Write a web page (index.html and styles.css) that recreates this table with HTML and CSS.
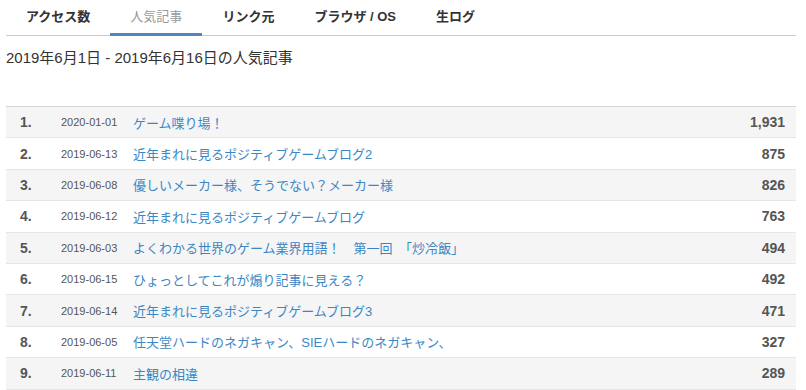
FILE: index.html
```html
<!DOCTYPE html>
<html lang="ja">
<head>
<meta charset="utf-8">
<link rel="stylesheet" href="styles.css">
</head>
<body>
<div class="page">
  <nav class="tabs">
    <a class="tab">アクセス数</a>
    <a class="tab active">人気記事</a>
    <a class="tab">リンク元</a>
    <a class="tab">ブラウザ / OS</a>
    <a class="tab">生ログ</a>
  </nav>
  <h2 class="period">2019年6月1日 - 2019年6月16日の人気記事</h2>
  <div class="ranking">
    <div class="row"><span class="rank">1.</span><span class="date">2020-01-01</span><a class="title">ゲーム喋り場！</a><span class="count">1,931</span></div>
    <div class="row"><span class="rank">2.</span><span class="date">2019-06-13</span><a class="title">近年まれに見るポジティブゲームブログ2</a><span class="count">875</span></div>
    <div class="row"><span class="rank">3.</span><span class="date">2019-06-08</span><a class="title">優しいメーカー様、そうでない？メーカー様</a><span class="count">826</span></div>
    <div class="row"><span class="rank">4.</span><span class="date">2019-06-12</span><a class="title">近年まれに見るポジティブゲームブログ</a><span class="count">763</span></div>
    <div class="row"><span class="rank">5.</span><span class="date">2019-06-03</span><a class="title">よくわかる世界のゲーム業界用語！　第一回　「炒冷飯」</a><span class="count">494</span></div>
    <div class="row"><span class="rank">6.</span><span class="date">2019-06-15</span><a class="title">ひょっとしてこれが煽り記事に見える？</a><span class="count">492</span></div>
    <div class="row"><span class="rank">7.</span><span class="date">2019-06-14</span><a class="title">近年まれに見るポジティブゲームブログ3</a><span class="count">471</span></div>
    <div class="row"><span class="rank">8.</span><span class="date">2019-06-05</span><a class="title">任天堂ハードのネガキャン、SIEハードのネガキャン、</a><span class="count">327</span></div>
    <div class="row"><span class="rank">9.</span><span class="date">2019-06-11</span><a class="title">主観の相違</a><span class="count">289</span></div>
  </div>
</div>
</body>
</html>
```

FILE: styles.css
```css
html, body {
  margin: 0;
  padding: 0;
  background: #ffffff;
}
body {
  font-family: "Liberation Sans", "Noto Sans CJK JP", sans-serif;
  color: #333333;
}
.page {
  padding: 0 10px 0 6px;
}
.tabs {
  display: flex;
  height: 35px;
  border-bottom: 1px solid #cccccc;
}
.tab {
  display: flex;
  align-items: center;
  padding: 0 20px 2px 20px;
  font-size: 13px;
  font-weight: bold;
  color: #333333;
  border-bottom: 3px solid transparent;
  margin-bottom: -1px;
}
.tab.active {
  color: #9a9a9a;
  font-weight: normal;
  border-bottom-color: #4f86bd;
}
.period {
  margin: 10px 0 0 0;
  font-size: 15px;
  font-weight: normal;
  line-height: 24px;
  color: #333333;
}
.ranking {
  margin-top: 36px;
  border-top: 1px solid #d5d5d5;
}
.row {
  display: grid;
  grid-template-columns: 55px 72px 1fr auto;
  align-items: center;
  height: 30.4px;
  border-bottom: 1px solid #e6e6e6;
}
.row:nth-child(odd) {
  background: #f5f5f5;
}
.rank {
  padding-left: 14px;
  font-size: 14px;
  font-weight: bold;
  color: #555555;
}
.date {
  font-size: 11px;
  color: #555555;
}
.title {
  font-size: 13px;
  color: #3b87c6;
  white-space: nowrap;
}
.count {
  padding-right: 11px;
  font-size: 14px;
  font-weight: bold;
  color: #555555;
  text-align: right;
}
```
